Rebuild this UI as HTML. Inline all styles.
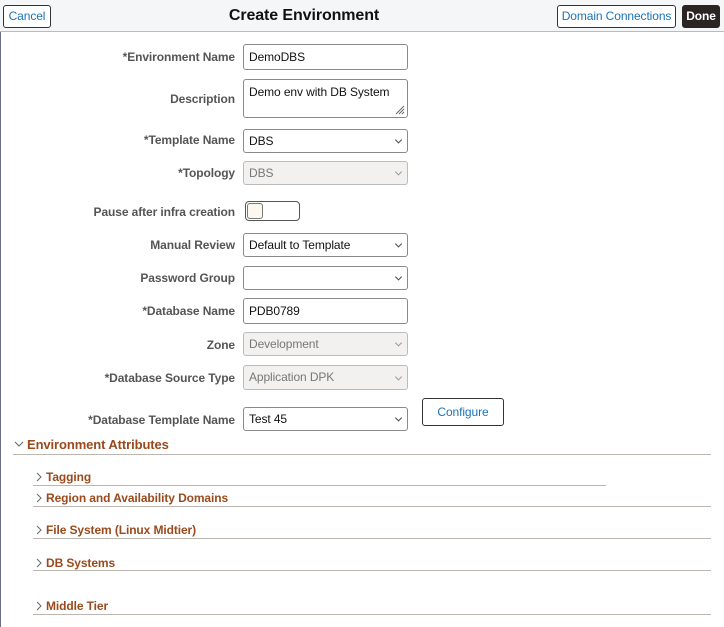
<!DOCTYPE html>
<html><head><style>
*{box-sizing:border-box;margin:0;padding:0}
body{width:724px;height:627px;background:#fff;font-family:"Liberation Sans",Arial,sans-serif;position:relative;overflow:hidden;letter-spacing:-0.1px}
.a{position:absolute}
.hdr{left:0;top:0;width:724px;height:32px;background:#f5f6f7;border-bottom:1px solid #bbb}
.btn{position:absolute;border:1px solid #333;border-radius:3px;background:#fff;color:#1a73b8;font-size:12px;text-align:center}
.lbl{position:absolute;right:489px;font-size:12px;font-weight:bold;color:#555;text-align:right;white-space:nowrap}
.in{position:absolute;left:243px;width:165px;border:1px solid #8a8a8a;border-radius:3px;background:#fff;font-size:12px;color:#111;padding-left:5px}
.dis{background:#f2f1ef;border-color:#bbb;color:#777}
.car{position:absolute;right:6px;top:50%;width:5px;height:5px;border-right:1px solid #444;border-bottom:1px solid #444;transform:translateY(-70%) rotate(45deg)}
.dis .car{border-color:#999}
.sec{position:absolute;font-size:12px;font-weight:bold;color:#9a4a1c;white-space:nowrap}
.ln{position:absolute;height:1px;background:#bcb6b0}
</style></head><body>
<div class="a hdr"></div>
<div class="a" style="left:0;top:32px;width:1px;height:595px;background:#6a6f88"></div>
<div class="btn" style="left:3px;top:5px;width:48px;height:23px;line-height:21px">Cancel</div>
<div class="a" style="left:0;width:608px;top:7px;text-align:center;font-size:16px;font-weight:bold;color:#111">Create Environment</div>
<div class="btn" style="left:557px;top:5px;width:119px;height:23px;line-height:21px">Domain Connections</div>
<div class="btn" style="left:682px;top:5px;width:38px;height:23px;line-height:21px;background:#2a2523;color:#fff;border-color:#2a2523;font-weight:bold">Done</div>

<div class="lbl" style="top:50px">*Environment Name</div>
<div class="in" style="top:44px;height:26px;line-height:24px">DemoDBS</div>
<div class="lbl" style="top:92px">Description</div>
<div class="in" style="top:79px;height:39px;padding-top:5px">Demo env with DB System
<svg class="a" style="right:2px;bottom:2px" width="10" height="10"><path d="M9 1L1 9M9 4L4 9M9 7L7 9" stroke="#666"/></svg></div>
<div class="lbl" style="top:133px">*Template Name</div>
<div class="in" style="top:129px;height:24px;line-height:22px">DBS<i class="car"></i></div>
<div class="lbl" style="top:166px">*Topology</div>
<div class="in dis" style="top:161px;height:24px;line-height:22px">DBS<i class="car"></i></div>
<div class="lbl" style="top:205px">Pause after infra creation</div>
<div class="a" style="left:245px;top:201px;width:55px;height:20px;border:1px solid #555;border-radius:4px"><div class="a" style="left:1px;top:1px;width:16px;height:16px;border:1px solid #777;border-radius:3px;background:#fcf8f0"></div></div>
<div class="lbl" style="top:238px">Manual Review</div>
<div class="in" style="top:233px;height:24px;line-height:22px">Default to Template<i class="car"></i></div>
<div class="lbl" style="top:271px">Password Group</div>
<div class="in" style="top:266px;height:24px"><i class="car"></i></div>
<div class="lbl" style="top:304px">*Database Name</div>
<div class="in" style="top:298px;height:26px;line-height:24px">PDB0789</div>
<div class="lbl" style="top:338px">Zone</div>
<div class="in dis" style="top:332px;height:24px;line-height:22px">Development<i class="car"></i></div>
<div class="lbl" style="top:371px">*Database Source Type</div>
<div class="in dis" style="top:365px;height:25px;line-height:23px">Application DPK<i class="car"></i></div>
<div class="lbl" style="top:413px">*Database Template Name</div>
<div class="in" style="top:407px;height:24px;line-height:22px">Test 45<i class="car"></i></div>
<div class="btn" style="left:422px;top:398px;width:82px;height:28px;line-height:26px">Configure</div>

<svg class="a" style="left:14px;top:440px" width="10" height="8"><path d="M1 2L5 6L9 2" stroke="#666" fill="none"/></svg>
<div class="sec" style="left:27px;top:437px;font-size:13px">Environment Attributes</div>
<div class="ln" style="left:13px;width:698px;top:454px"></div>

<svg class="a" style="left:35px;top:472px" width="8" height="10"><path d="M2 1L6 5L2 9" stroke="#666" fill="none"/></svg>
<div class="sec" style="left:46px;top:470px">Tagging</div>
<div class="ln" style="left:33px;width:573px;top:485px"></div>
<svg class="a" style="left:35px;top:493px" width="8" height="10"><path d="M2 1L6 5L2 9" stroke="#666" fill="none"/></svg>
<div class="sec" style="left:46px;top:491px">Region and Availability Domains</div>
<div class="ln" style="left:33px;width:678px;top:506px"></div>
<svg class="a" style="left:35px;top:525px" width="8" height="10"><path d="M2 1L6 5L2 9" stroke="#666" fill="none"/></svg>
<div class="sec" style="left:46px;top:523px">File System (Linux Midtier)</div>
<div class="ln" style="left:33px;width:678px;top:538px"></div>
<svg class="a" style="left:35px;top:558px" width="8" height="10"><path d="M2 1L6 5L2 9" stroke="#666" fill="none"/></svg>
<div class="sec" style="left:46px;top:556px">DB Systems</div>
<div class="ln" style="left:33px;width:678px;top:570px"></div>
<svg class="a" style="left:35px;top:601px" width="8" height="10"><path d="M2 1L6 5L2 9" stroke="#666" fill="none"/></svg>
<div class="sec" style="left:46px;top:599px">Middle Tier</div>
<div class="ln" style="left:33px;width:678px;top:614px"></div>
</body></html>
